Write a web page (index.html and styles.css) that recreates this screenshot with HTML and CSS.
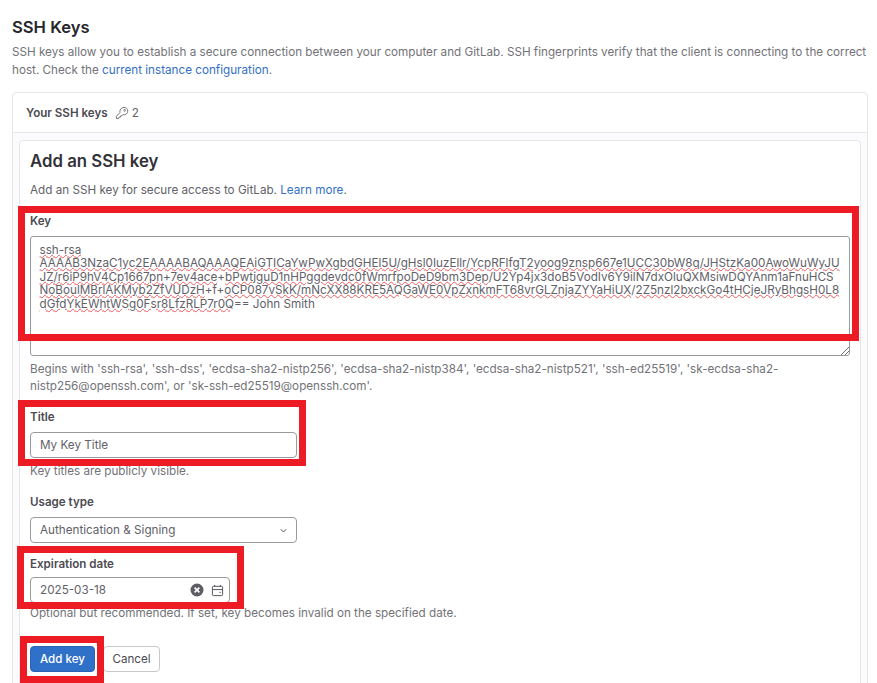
FILE: index.html
```html
<!DOCTYPE html>
<html>
  <head>
    <title>SSH Keys</title>
    <link rel="stylesheet" href="styles.css">
  </head>
  <body>
    <div class="page">
      <h2 class="page-title">SSH Keys</h2>
      <p class="page-intro">
        SSH keys allow you to establish a secure connection between your computer and GitLab. SSH fingerprints verify that the client is connecting to the correct host. Check the <a href="#">current instance configuration</a>.
      </p>

      <div class="card">
        <div class="card-header">
          <strong>Your SSH keys</strong>
          <svg class="key-icon" viewBox="0 0 16 16" width="14" height="14" fill="none" stroke="#737278" stroke-width="1.1">
            <path d="M5.6 7.6 1.6 11.8V14.4H4.2L4.6 12.8H6.2L6.6 11.2H8L9 9.9C11.9 10.7 14.6 8.6 14.6 5.8C14.6 3.4 12.7 1.6 10.3 1.6C7.2 1.6 5 4.6 5.6 7.6Z"/>
            <circle cx="11" cy="5" r="1"/>
          </svg>
          <span class="count">2</span>
        </div>
        <div class="card-body">
          <form class="key-form">
            <h3 class="form-title">Add an SSH key</h3>
            <p class="form-intro">Add an SSH key for secure access to GitLab. <a href="#">Learn more</a>.</p>

            <div class="form-group group-key">
              <label>Key</label>
              <div class="key-area">
                <span class="key-line"><span class="typo">ssh-rsa</span></span>
                <span class="key-line"><span class="typo">AAAAB3NzaC1yc2EAAAABAQAAAQEAiGTICaYwPwXgbdGHEl5U/gHsl0IuzEllr/YcpRFlfgT2yoog9znsp667e1UCC30bW8q/JHStzKa00AwoWuWyJU</span></span>
                <span class="key-line"><span class="typo">JZ/r6iP9hV4Cp1667pn</span>+<span class="typo">7ev4ace</span>+<span class="typo">bPwtjguD1nHPggdevdc0fWmrfpoDeD9bm3Dep</span>/U2Yp4jx3doB5VodIv6Y9ilN7dxOluQXMsiwDQYAnm1aFnuHCS</span>
                <span class="key-line"><span class="typo">NoBoulMBrlAKMyb2ZfVUDzH</span>+f+<span class="typo">oCP087vSkK/mNcXX88KRE5AQGaWE0VpZxnkmFT68vrGLZnjaZYYaHiUX</span>/<span class="typo">2Z5nzl2bxckGo4tHCjeJRyBhgsH0L8</span></span>
                <span class="key-line"><span class="typo">dGfdYkEWhtWSg0Fsr8LfzRLP7r0Q</span>== John Smith</span>
                <svg class="resize-grip" viewBox="0 0 8 8" width="8" height="8" stroke="#737278" stroke-width="1">
                  <path d="M8 0 0 8M8 4 4 8"/>
                </svg>
              </div>
              <small class="help">Begins with 'ssh-rsa', 'ssh-dss', 'ecdsa-sha2-nistp256', 'ecdsa-sha2-nistp384', 'ecdsa-sha2-nistp521', 'ssh-ed25519', 'sk-ecdsa-sha2-nistp256@openssh.com', or 'sk-ssh-ed25519@openssh.com'.</small>
            </div>

            <div class="form-group group-title">
              <label>Title</label>
              <div class="field field-md">My Key Title</div>
              <small class="help">Key titles are publicly visible.</small>
            </div>

            <div class="form-group group-usage">
              <label>Usage type</label>
              <div class="field field-md field-select">
                Authentication &amp; Signing
                <svg viewBox="0 0 16 16" width="11" height="11" fill="none" stroke="#4c4b51" stroke-width="1.4">
                  <path d="M4 6.2 8 10.2 12 6.2"/>
                </svg>
              </div>
            </div>

            <div class="form-group group-expiry">
              <label>Expiration date</label>
              <div class="field field-sm field-date">
                <span class="date-value">2025-03-18</span>
                <svg viewBox="0 0 14 14" width="14" height="14">
                  <circle cx="7" cy="7" r="6.5" fill="#5e5d63"/>
                  <path d="M4.6 4.6 9.4 9.4M9.4 4.6 4.6 9.4" stroke="#fff" stroke-width="1.6"/>
                </svg>
                <svg viewBox="0 0 14 14" width="13" height="13" fill="none" stroke="#4c4b51" stroke-width="1">
                  <rect x="1.5" y="2.5" width="11" height="10" rx="1"/>
                  <path d="M1.5 6H12.5M4 1V3M10 1V3M9 9H10.5"/>
                </svg>
              </div>
              <small class="help">Optional but recommended. If set, key becomes invalid on the specified date.</small>
            </div>

            <div class="actions">
              <button type="button" class="button button-primary">Add key</button>
              <button type="button" class="button button-cancel">Cancel</button>
            </div>
          </form>
        </div>
      </div>
    </div>

    <!-- red annotation boxes drawn over the screenshot -->
    <div class="mark mark-key"></div>
    <div class="mark mark-title"></div>
    <div class="mark mark-expiry"></div>
    <div class="mark mark-add"></div>
  </body>
</html>
```

FILE: styles.css
```css
html,
body {
  margin: 0;
  height: 683px;
  overflow: hidden;
  background-color: #fff;
}

body {
  position: relative;
  font-family: "Inter", "Liberation Sans", sans-serif;
  font-size: 11.7px;
  color: #333238;
}

a {
  color: #3470c4;
  text-decoration: none;
}

.page {
  padding: 17px 9px 0 12px;
}

.page-title {
  margin: 0;
  font-size: 16.6px;
  line-height: 20px;
  font-weight: 600;
  color: #26252b;
}

.page-intro {
  margin: 6px 0 13px;
  line-height: 18px;
  color: #737278;
}

.card {
  border: 1px solid #e6e6ea;
  border-radius: 4px;
}

.card-header {
  display: flex;
  align-items: center;
  height: 39px;
  padding-left: 13px;
  border-bottom: 1px solid #e6e6ea;
  color: #4c4b51;
}

.card-header strong {
  font-size: 11.6px;
  font-weight: 600;
}

.key-icon {
  margin-left: 7px;
}

.count {
  margin-left: 3px;
  color: #626168;
}

.card-body {
  padding: 7px 6px 0;
  background-color: #fbfafd;
}

.key-form {
  height: 560px;
  padding: 0 10px;
  background-color: #fff;
  border: 1px solid #e6e6ea;
  border-radius: 4px;
}

.form-title {
  margin: 10px 0 0;
  font-size: 16.8px;
  line-height: 20px;
  font-weight: 600;
  color: #333238;
}

.form-intro {
  margin: 10px 0 0;
  line-height: 18px;
  color: #626168;
}

.form-group label {
  display: block;
  font-size: 11.6px;
  font-weight: 600;
  line-height: 16px;
  color: #4c4b51;
}

.group-key {
  margin-top: 14px;
}

.group-title {
  margin-top: 14px;
}

.group-usage {
  margin-top: 14px;
}

.group-expiry {
  margin-top: 13px;
}

.key-area {
  position: relative;
  box-sizing: border-box;
  height: 120px;
  margin-top: 7px;
  padding: 7px 8.5px;
  border: 1px solid #9a999e;
  border-radius: 3px;
  color: #626168;
  line-height: 13.4px;
}

.key-line {
  display: block;
  white-space: nowrap;
}

.typo {
  text-decoration: underline wavy #ee5a5f 1px;
  text-underline-offset: 0;
}

.resize-grip {
  position: absolute;
  right: 0;
  bottom: 0;
}

.help {
  display: block;
  margin-top: 5px;
  font-size: 11.7px;
  line-height: 17px;
  color: #737278;
}

.field {
  box-sizing: border-box;
  display: flex;
  align-items: center;
  height: 26px;
  margin-top: 7px;
  padding: 0 9px;
  border: 1px solid #9a999e;
  border-radius: 4px;
  color: #626168;
}

.field-md {
  width: 267px;
}

.field-sm {
  width: 200px;
}

.field-select {
  justify-content: space-between;
  padding-right: 7px;
}

.field-date {
  padding-right: 5px;
}

.date-value {
  flex: 1;
}

.field-date svg + svg {
  margin-left: 7px;
}

.group-expiry .field {
  margin-top: 5px;
}

.group-expiry .help {
  margin-top: 2px;
}

.actions {
  display: flex;
  gap: 8px;
  margin-top: 24px;
}

.button {
  box-sizing: border-box;
  height: 26px;
  padding: 0 7px;
  font-family: inherit;
  font-size: 11.6px;
  color: #4c4b51;
  background-color: #fff;
  border: 1px solid #c9c8cc;
  border-radius: 4px;
}

.button-primary {
  width: 65px;
  font-weight: 500;
  color: #fff;
  background-color: #2f70c9;
  border-color: #2a63b3;
}

.button-cancel {
  width: 57px;
}

.mark {
  position: absolute;
  box-sizing: border-box;
  border: 7px solid #ed1c24;
}

.mark-key {
  left: 18px;
  top: 206px;
  width: 841px;
  height: 135px;
}

.mark-title {
  left: 18px;
  top: 400px;
  width: 288px;
  height: 66px;
}

.mark-expiry {
  left: 17px;
  top: 546px;
  width: 227px;
  height: 63px;
}

.mark-add {
  left: 20px;
  top: 636px;
  width: 84px;
  height: 47px;
}
```
